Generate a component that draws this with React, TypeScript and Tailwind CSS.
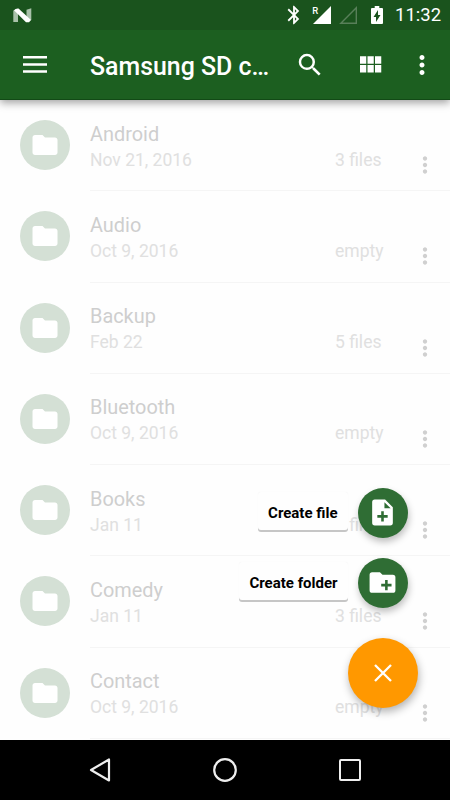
import { MdBluetooth, MdFolder, MdMoreVert, MdSearch } from 'react-icons/md';

const folders = [
  { name: "Android", date: "Nov 21, 2016", info: "3 files" },
  { name: "Audio", date: "Oct 9, 2016", info: "empty" },
  { name: "Backup", date: "Feb 22", info: "5 files" },
  { name: "Bluetooth", date: "Oct 9, 2016", info: "empty" },
  { name: "Books", date: "Jan 11", info: "2 files" },
  { name: "Comedy", date: "Jan 11", info: "3 files" },
  { name: "Contact", date: "Oct 9, 2016", info: "empty" },
];

function StatusBar() {
  return (
    <div className="h-[30px] bg-[#1a531d] flex items-center pl-[13px] pr-[10px] text-white">
      <svg className="w-[19px] h-[15px]" viewBox="0 0 19 15">
        <path d="M0.300 2.500 5 1v13H0.300zM13.500 1.800l4.800-1.500V12l-4.800 1.500z" fill="#a9c1aa" />
        <path d="M1 2.300Q2.500.3 5.500.6L18 12l-2 2.300h-3z" fill="#fff" />
      </svg>
      <div className="ml-auto flex items-center">
        <MdBluetooth className="w-[22px] h-[22px]" />
        <svg className="w-[20px] h-[20px] ml-[7.5px]" viewBox="0 0 20 20">
          <path d="M19 1v18H1z" fill="#fff" />
          <path d="M0 0h7v10H0z" fill="#1a531d" />
          <text x="0.300" y="8.500" fontSize="9.500" fontWeight="500" fontFamily="Roboto, sans-serif" fill="#fff">R</text>
        </svg>
        <svg className="w-[20px] h-[20px] ml-[6px]" viewBox="0 0 20 20">
          <path d="M18.300 2.800v15.500H2.800z" fill="none" stroke="#587f59" strokeWidth="1.400" />
        </svg>
        <svg className="w-[12px] h-[18px] ml-[13px]" viewBox="0 0 12 18">
          <path d="M1 2h2.700V0h4.600V2H11q1 0 1 1v14q0 1-1 1H1q-1 0-1-1V3q0-1 1-1z" fill="#fff" />
          <path d="M7 4v5h2.500L5 16v-5H2.500z" fill="#1a531d" />
        </svg>
        <span className="ml-[12px] text-[18.5px] leading-[30px] w-[45px] whitespace-nowrap">11:32</span>
      </div>
    </div>
  );
}

function AppBar() {
  return (
    <div className="h-[70px] bg-[#1c5f20] border-b border-[#124a16] flex items-center text-white">
      <svg className="ml-[23px] w-[24px] h-[17px]" viewBox="0 0 24 17" fill="#fff">
        <path d="M0 0h24v2.500H0zM0 7.200h24v2.500H0zM0 14.300h24v2.500H0z" />
      </svg>
      <h1 className="ml-[43px] mt-[4px] w-[182px] text-[24.9px] font-medium leading-[32px] whitespace-nowrap">Samsung SD c…</h1>
      <MdSearch className="ml-[23px] w-[30px] h-[30px]" />
      <svg className="ml-[30px] w-[30px] h-[30px]" viewBox="0 0 24 24" fill="#fff">
        <path d="M4 11h5V5H4v6zm0 7h5v-6H4v6zm6 0h5v-6h-5v6zm6 0h5v-6h-5v6zm-6-7h5V5h-5v6zm6-6v6h5V5h-5z" />
      </svg>
      <MdMoreVert className="ml-[22px] w-[30px] h-[30px]" />
    </div>
  );
}

function FolderRow({ name, date, info }: { name: string; date: string; info: string }) {
  return (
    <div className="h-[91.25px] shrink-0 flex pl-5">
      <div className="mt-5 w-[50px] h-[50px] shrink-0 rounded-full bg-[#d4e0d5] flex items-center justify-center">
        <MdFolder className="w-[30px] h-[30px] text-white" />
      </div>
      <div className="ml-5 flex-1 border-b border-[#f5f5f5] flex">
        <div className="w-[245px] pt-[21.5px]">
          <div className="text-[19.9px] leading-[26px] text-[#cecece]">{name}</div>
          <div className="text-[17.5px] leading-[25px] text-[#e0e0e0]">{date}</div>
        </div>
        <div className="w-[77px] pt-[47.5px] text-[17.5px] leading-[25px] text-[#e0e0e0]">{info}</div>
        <MdMoreVert className="mt-[52px] w-[26px] h-[26px] text-[#d0d0d0]" />
      </div>
    </div>
  );
}

function Action({ label, children }: { label: string; children: React.ReactNode }) {
  return (
    <div className="flex items-center h-[50px] mr-[10px]">
      <span className="mb-[4px] mr-[10px] h-[38px] px-[10px] rounded-[3px] bg-[#fefefe] text-[15px] leading-[42px] font-bold text-black shadow-[0_2px_0_#c6c6c6,0_0_1px_#eeeeee]">
        {label}
      </span>
      <div className="w-[50px] h-[50px] rounded-full bg-[#2f6d34] flex items-center justify-center shadow-[1px_4px_7px_rgba(0,0,0,0.25)]">
        {children}
      </div>
    </div>
  );
}

export default function App() {
  return (
    <main className="relative w-[450px] h-[800px] overflow-hidden flex flex-col bg-[#fefefe] font-['Roboto',sans-serif]">
      <header className="relative z-10 shadow-[0_3px_8px_rgba(0,0,0,0.36)]">
        <StatusBar />
        <AppBar />
      </header>

      <section className="h-[640px] overflow-hidden flex flex-col">
        {folders.map(f => (
          <FolderRow key={f.name} {...f} />
        ))}
      </section>

      {/* Floating action menu */}
      <div className="absolute right-[32.5px] bottom-[92.5px] flex flex-col items-end gap-5">
        <Action label="Create file">
          <svg className="w-[31px] h-[31px]" viewBox="0 0 24 24">
            <path d="M6 2h8l6 6v12a2 2 0 0 1-2 2H6a2 2 0 0 1-2-2V4a2 2 0 0 1 2-2zm7.500 2v4.800h4.800zM11 11v3H8v2h3v3h2v-3h3v-2h-3v-3z" fill="#fff" fillRule="evenodd" />
          </svg>
        </Action>
        <Action label="Create folder">
          <svg className="w-[31px] h-[31px]" viewBox="0 0 24 24" fill="#fff">
            <path d="M20 6h-8l-2-2H4a2 2 0 0 0-2 2v12a2 2 0 0 0 2 2h16a2 2 0 0 0 2-2V8a2 2 0 0 0-2-2zm-1 9h-3v3h-2v-3h-3v-2h3v-3h2v3h3z" />
          </svg>
        </Action>
        <div className="mt-[10px] w-[70px] h-[70px] rounded-full bg-[#ff9800] flex items-center justify-center shadow-[1px_4px_8px_rgba(0,0,0,0.3)]">
          <svg className="w-[18px] h-[18px]" viewBox="0 0 18 18" stroke="#fff" strokeWidth="2.300">
            <path d="M1 1l16 16M17 1 1 17" />
          </svg>
        </div>
      </div>

      <nav className="h-[60px] bg-black flex items-center">
        <svg className="ml-[89px] w-[22px] h-[26px]" viewBox="0 0 22 26" fill="none" stroke="#eee" strokeWidth="2.200" strokeLinejoin="round">
          <path d="M20 2.500v21L2 13z" />
        </svg>
        <svg className="ml-[101px] w-[26px] h-[26px]" viewBox="0 0 26 26" fill="none" stroke="#eee" strokeWidth="2.200">
          <circle cx="13" cy="13" r="10.800" />
        </svg>
        <div className="ml-[101px] w-[22px] h-[22px] rounded-[2px] border-2 border-[#eee]" />
      </nav>
    </main>
  );
}
